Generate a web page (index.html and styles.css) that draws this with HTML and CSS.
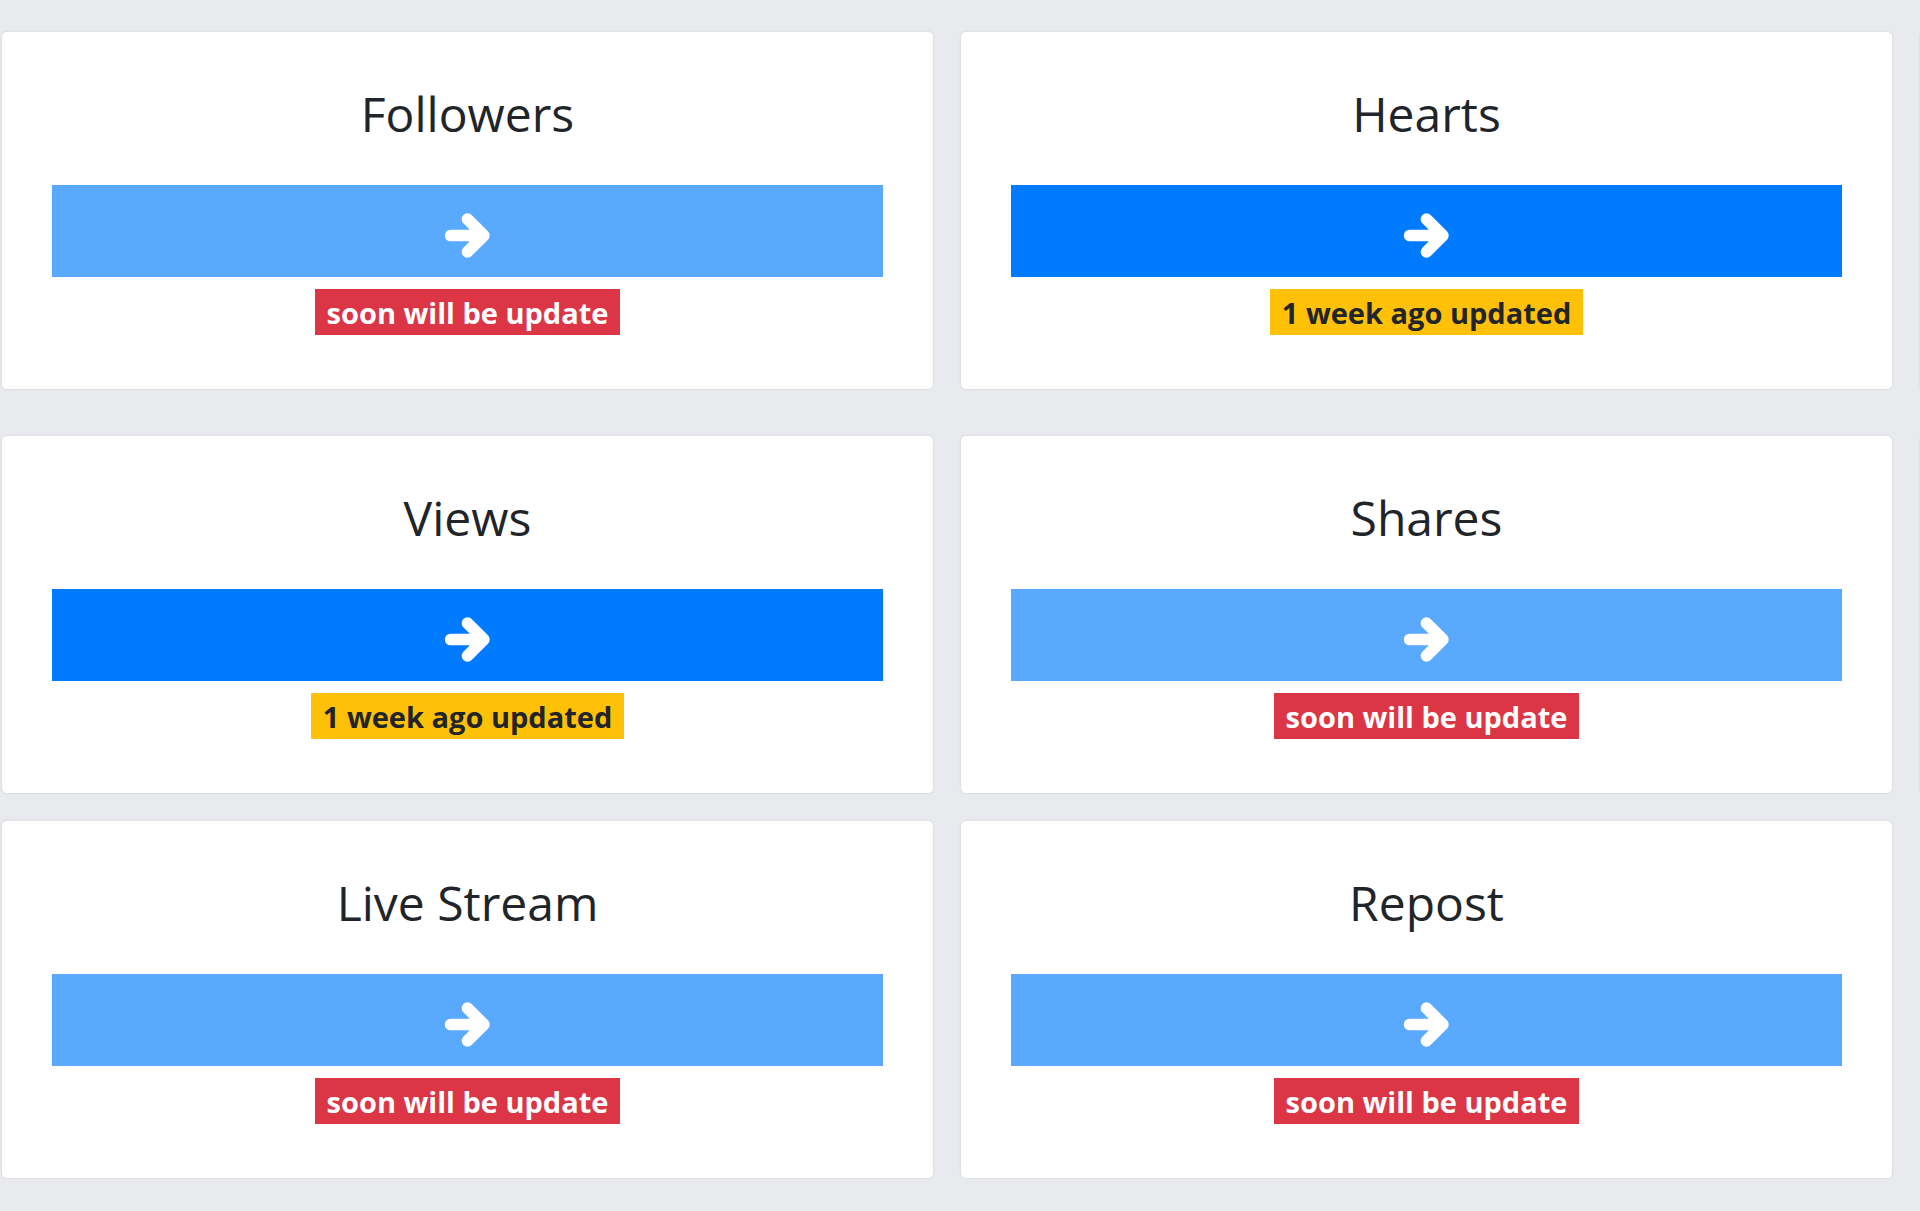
FILE: index.html
```html
<!DOCTYPE html>
<html lang="en">
<head>
<meta charset="utf-8">
<title>Services</title>
<link rel="stylesheet" href="styles.css">
</head>
<body>
<main class="page">
  <div class="row row-first">
    <section class="card">
      <h3 class="card-title">Followers</h3>
      <a class="btn btn-disabled"><svg class="arrow" viewBox="0 0 48 48"><path d="M7.5 24H40M24 8l16 16-16 16"/></svg></a>
      <span class="badge badge-danger">soon will be update</span>
    </section>
    <section class="card">
      <h3 class="card-title">Hearts</h3>
      <a class="btn btn-primary"><svg class="arrow" viewBox="0 0 48 48"><path d="M7.5 24H40M24 8l16 16-16 16"/></svg></a>
      <span class="badge badge-warning">1 week ago updated</span>
    </section>
    <section class="card card-edge"></section>
  </div>
  <div class="row row-second">
    <section class="card">
      <h3 class="card-title">Views</h3>
      <a class="btn btn-primary"><svg class="arrow" viewBox="0 0 48 48"><path d="M7.5 24H40M24 8l16 16-16 16"/></svg></a>
      <span class="badge badge-warning">1 week ago updated</span>
    </section>
    <section class="card">
      <h3 class="card-title">Shares</h3>
      <a class="btn btn-disabled"><svg class="arrow" viewBox="0 0 48 48"><path d="M7.5 24H40M24 8l16 16-16 16"/></svg></a>
      <span class="badge badge-danger">soon will be update</span>
    </section>
    <section class="card card-edge"></section>
  </div>
  <div class="row row-third">
    <section class="card">
      <h3 class="card-title">Live Stream</h3>
      <a class="btn btn-disabled"><svg class="arrow" viewBox="0 0 48 48"><path d="M7.5 24H40M24 8l16 16-16 16"/></svg></a>
      <span class="badge badge-danger">soon will be update</span>
    </section>
    <section class="card">
      <h3 class="card-title">Repost</h3>
      <a class="btn btn-disabled"><svg class="arrow" viewBox="0 0 48 48"><path d="M7.5 24H40M24 8l16 16-16 16"/></svg></a>
      <span class="badge badge-danger">soon will be update</span>
    </section>
  </div>
</main>
</body>
</html>
```
FILE: styles.css
```css
html, body {
  margin: 0;
  padding: 0;
}
body {
  background: #e9eaee;
  font-family: "Open Sans", "Noto Sans", "Liberation Sans", sans-serif;
  color: #212529;
  overflow: hidden;
  height: 1211px;
}
.page {
  padding-top: 31px;
  padding-left: 1px;
  width: 1919px;
  overflow: hidden;
}
.row {
  display: grid;
  grid-template-columns: 933px 933px 40px;
  column-gap: 26px;
}
.row-first { margin-bottom: 45px; }
.row-second { margin-bottom: 26px; }
.card {
  box-sizing: border-box;
  height: 359px;
  background: #fff;
  border: 1px solid #e0e1e5;
  border-radius: 6px;
  box-shadow: 0 0 2px rgba(0, 0, 0, 0.05);
  padding: 53px 50px 0;
  display: flex;
  flex-direction: column;
  align-items: center;
}
.card-edge {
  padding: 0;
}
.card-title {
  margin: 0;
  font-size: 48px;
  line-height: 58px;
  font-weight: 400;
  color: #212529;
  text-align: center;
}
.btn {
  box-sizing: border-box;
  display: block;
  width: 100%;
  height: 92px;
  margin-top: 42px;
  padding-top: 26px;
}
.btn-primary { background: #007bff; }
.btn-disabled { background: #59a9ff; }
.arrow {
  display: block;
  width: 49px;
  height: 49px;
  margin: 0 auto;
  fill: none;
  stroke: #fff;
  stroke-width: 11.5;
  stroke-linecap: round;
  stroke-linejoin: round;
}
.badge {
  display: inline-block;
  box-sizing: border-box;
  margin-top: 12px;
  height: 46px;
  padding: 2px 12px 0;
  font-size: 29px;
  line-height: 44px;
  font-weight: 700;
  white-space: nowrap;
}
.badge-danger { background: #dc3545; color: #fff; }
.badge-warning { background: #ffc107; color: #212529; }
```
